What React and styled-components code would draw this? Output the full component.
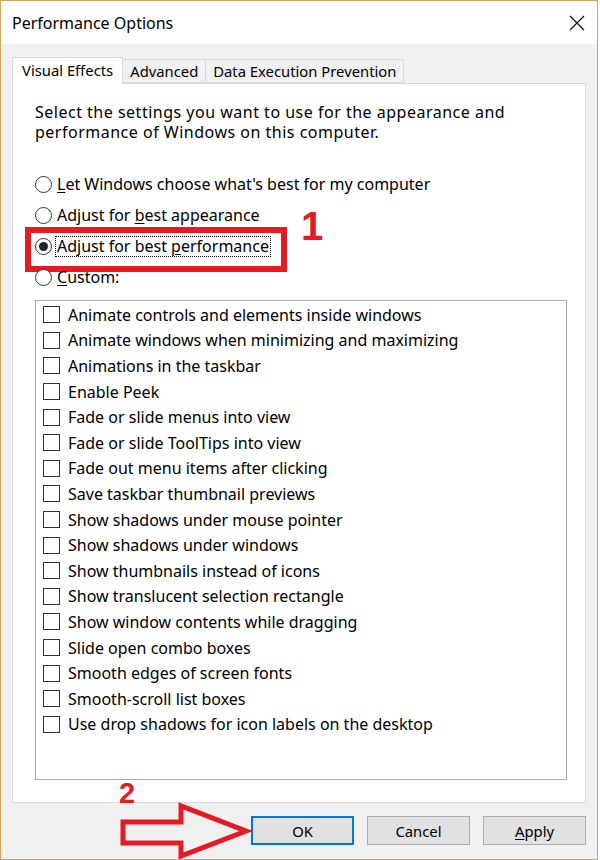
import React from "react";
import styled, { createGlobalStyle } from "styled-components";

const GlobalStyle = createGlobalStyle`
  html, body {
    margin: 0;
    padding: 0;
    background: #ffffff;
  }
  body {
    font-family: "Noto Sans", "Open Sans", sans-serif;
    color: #000;
  }
`;

const RED = "#e41b23";

const Window = styled.div`
  position: relative;
  box-sizing: border-box;
  width: 598px;
  height: 860px;
  border: 1px solid #d2a35e;
  display: flex;
  flex-direction: column;
  background: #f0f0f0;
  overflow: hidden;
`;

const TitleBar = styled.div`
  height: 43px;
  background: #fff;
  display: flex;
  align-items: center;
  justify-content: space-between;
  padding: 0 12px 0 11px;
`;

const Title = styled.div`
  font-size: 16px;
`;

const Body = styled.div`
  flex: 1;
  padding: 13px 11px 0 11px;
  display: flex;
  flex-direction: column;
`;

const TabStrip = styled.div`
  display: flex;
  align-items: flex-end;
  height: 26px;
  position: relative;
  z-index: 1;
`;

const Tab = styled.div`
  box-sizing: border-box;
  height: ${(p) => (p.$active ? "27px" : "24px")};
  margin-bottom: ${(p) => (p.$active ? "-1px" : "0")};
  padding: 0 ${(p) => (p.$active ? "9px" : "7px")};
  background: ${(p) => (p.$active ? "#fff" : "#f0f0f0")};
  border: 1px solid #d9d9d9;
  border-bottom: ${(p) => (p.$active ? "none" : "1px solid #d9d9d9")};
  margin-left: ${(p) => (p.$first ? "0" : "-1px")};
  display: flex;
  align-items: center;
  font-size: 14.8px;
  padding-bottom: ${(p) => (p.$active ? "3px" : "0")};
`;

const Panel = styled.div`
  box-sizing: border-box;
  height: 720px;
  background: #fff;
  border: 1px solid #d9d9d9;
  padding: 18px 0 0 22px;
  display: flex;
  flex-direction: column;
`;

const Intro = styled.p`
  margin: 0;
  font-size: 16px;
  letter-spacing: 0.5px;
  line-height: 20px;
`;

const RadioList = styled.div`
  margin-top: 27px;
  display: flex;
  flex-direction: column;
`;

const RadioRow = styled.div`
  position: relative;
  height: 31px;
  display: flex;
  align-items: center;
  font-size: 16px;
`;

const RadioCircle = styled.span`
  box-sizing: border-box;
  width: 17px;
  height: 17px;
  border-radius: 50%;
  border: 1px solid #333;
  background: #fff;
  display: flex;
  align-items: center;
  justify-content: center;
  margin-right: 4px;
  &::after {
    content: "";
    display: ${(p) => (p.$checked ? "block" : "none")};
    width: 9px;
    height: 9px;
    border-radius: 50%;
    background: #222;
  }
`;

const Label = styled.span`
  padding: 0 1px;
  line-height: 19px;
  outline: ${(p) => (p.$focused ? "1px dotted #000" : "none")};
`;

const Key = styled.u`
  text-decoration-thickness: 1px;
  text-underline-offset: 2px;
`;

const Highlight = styled.div`
  position: absolute;
  left: -10px;
  top: -4px;
  width: 262px;
  height: 45px;
  box-sizing: border-box;
  border: 6px solid ${RED};
  pointer-events: none;
`;

const Marker = styled.div`
  position: absolute;
  font-family: "Liberation Sans", Arial, sans-serif;
  font-weight: bold;
  color: ${RED};
  font-size: ${(p) => p.$size}px;
  line-height: 1;
`;

const ListBox = styled.div`
  box-sizing: border-box;
  margin-top: 7px;
  width: 532px;
  height: 480px;
  border: 1px solid #a7a7a7;
  padding: 1px 0 0 7px;
  display: flex;
  flex-direction: column;
`;

const CheckRow = styled.div`
  height: 25.6px;
  display: flex;
  align-items: center;
  font-size: 16px;
`;

const CheckBox = styled.span`
  box-sizing: border-box;
  width: 17px;
  height: 17px;
  border: 1px solid #333;
  background: #fff;
  margin-right: 8px;
  flex: none;
`;

const ButtonRow = styled.div`
  display: flex;
  justify-content: flex-end;
  gap: 13px;
  margin-top: 13px;
`;

const Button = styled.div`
  box-sizing: border-box;
  width: 103px;
  height: 29px;
  background: #e1e1e1;
  border: ${(p) => (p.$default ? "2px solid #0078d7" : "1px solid #adadad")};
  display: flex;
  align-items: center;
  justify-content: center;
  font-size: 14.8px;
`;

const ArrowSvg = styled.svg`
  position: absolute;
  left: 112px;
  top: 797px;
`;

const effects = [
  "Animate controls and elements inside windows",
  "Animate windows when minimizing and maximizing",
  "Animations in the taskbar",
  "Enable Peek",
  "Fade or slide menus into view",
  "Fade or slide ToolTips into view",
  "Fade out menu items after clicking",
  "Save taskbar thumbnail previews",
  "Show shadows under mouse pointer",
  "Show shadows under windows",
  "Show thumbnails instead of icons",
  "Show translucent selection rectangle",
  "Show window contents while dragging",
  "Slide open combo boxes",
  "Smooth edges of screen fonts",
  "Smooth-scroll list boxes",
  "Use drop shadows for icon labels on the desktop",
];

function CloseIcon() {
  return (
    <svg width="16" height="16" viewBox="0 0 16 16">
      <path d="M1 1 L15 15 M15 1 L1 15" stroke="#111" strokeWidth="1.2" fill="none" />
    </svg>
  );
}

export default function App() {
  return (
    <>
      <GlobalStyle />
      <Window>
        <TitleBar>
          <Title>Performance Options</Title>
          <CloseIcon />
        </TitleBar>
        <Body>
          <TabStrip>
            <Tab $active $first>Visual Effects</Tab>
            <Tab>Advanced</Tab>
            <Tab>Data Execution Prevention</Tab>
          </TabStrip>
          <Panel>
            <Intro>
              Select the settings you want to use for the appearance and
              <br />
              performance of Windows on this computer.
            </Intro>
            <RadioList>
              <RadioRow>
                <RadioCircle />
                <Label>
                  <Key>L</Key>et Windows choose what's best for my computer
                </Label>
              </RadioRow>
              <RadioRow>
                <RadioCircle />
                <Label>
                  Adjust for <Key>b</Key>est appearance
                </Label>
              </RadioRow>
              <RadioRow>
                <RadioCircle $checked />
                <Label $focused>
                  Adjust for best <Key>p</Key>erformance
                </Label>
                <Highlight />
                <Marker $size={40} style={{ left: 266, top: -25 }}>1</Marker>
              </RadioRow>
              <RadioRow>
                <RadioCircle />
                <Label>
                  <Key>C</Key>ustom:
                </Label>
              </RadioRow>
            </RadioList>
            <ListBox>
              {effects.map((e) => (
                <CheckRow key={e}>
                  <CheckBox />
                  {e}
                </CheckRow>
              ))}
            </ListBox>
          </Panel>
          <ButtonRow>
            <Button $default>OK</Button>
            <Button>Cancel</Button>
            <Button>
              <span>
                <Key>A</Key>pply
              </span>
            </Button>
          </ButtonRow>
        </Body>
        <Marker $size={29} style={{ left: 118, top: 778 }}>2</Marker>
        <ArrowSvg width="140" height="64" viewBox="0 0 140 64">
          <path
            d="M10 24 L68 24 L68 8 L133 33 L68 58 L68 45 L10 45 Z"
            fill="none"
            stroke={RED}
            strokeWidth="5"
            strokeLinejoin="miter"
          />
        </ArrowSvg>
      </Window>
    </>
  );
}
